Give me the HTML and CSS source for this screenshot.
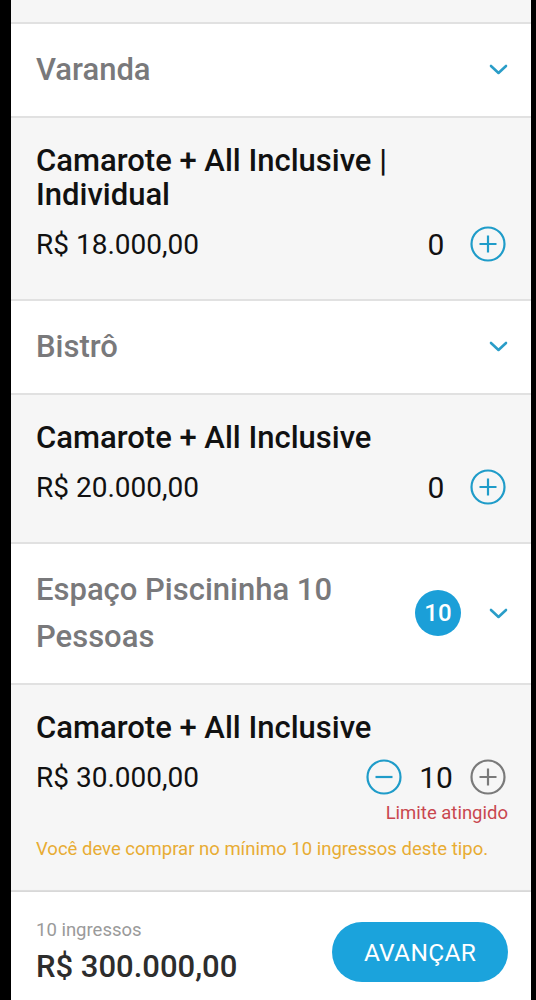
FILE: index.html
```html
<!DOCTYPE html>
<html lang="pt-BR">
<head>
<meta charset="utf-8">
<title>Ingressos</title>
<link rel="stylesheet" href="styles.css">
</head>
<body>
<div class="screen">
  <div class="top-rest"></div>

  <div class="group-header">
    <span class="group-title">Varanda</span>
    <div class="group-right">
      <svg class="chevron" viewBox="0 0 19 11" width="19" height="11"><path d="M2 2 L9.5 9 L17 2"/></svg>
    </div>
  </div>

  <div class="item">
    <div class="item-title">Camarote + All Inclusive | Individual</div>
    <div class="price-row">
      <span class="price">R$ 18.000,00</span>
      <div class="qty">
        <span class="qty-num">0</span>
        <svg class="qbtn blue" viewBox="0 0 36 36" width="36" height="36"><circle cx="18" cy="18" r="16.5"/><path d="M9.5 18 H26.5 M18 9.5 V26.5"/></svg>
      </div>
    </div>
  </div>

  <div class="group-header">
    <span class="group-title">Bistrô</span>
    <div class="group-right">
      <svg class="chevron" viewBox="0 0 19 11" width="19" height="11"><path d="M2 2 L9.5 9 L17 2"/></svg>
    </div>
  </div>

  <div class="item">
    <div class="item-title">Camarote + All Inclusive</div>
    <div class="price-row">
      <span class="price">R$ 20.000,00</span>
      <div class="qty">
        <span class="qty-num">0</span>
        <svg class="qbtn blue" viewBox="0 0 36 36" width="36" height="36"><circle cx="18" cy="18" r="16.5"/><path d="M9.5 18 H26.5 M18 9.5 V26.5"/></svg>
      </div>
    </div>
  </div>

  <div class="group-header">
    <span class="group-title">Espaço Piscininha 10 Pessoas</span>
    <div class="group-right">
      <span class="badge">10</span>
      <svg class="chevron" viewBox="0 0 19 11" width="19" height="11"><path d="M2 2 L9.5 9 L17 2"/></svg>
    </div>
  </div>

  <div class="item item--limited">
    <div class="item-title">Camarote + All Inclusive</div>
    <div class="price-row">
      <span class="price">R$ 30.000,00</span>
      <div class="qty">
        <svg class="qbtn blue" viewBox="0 0 36 36" width="36" height="36"><circle cx="18" cy="18" r="16.5"/><path d="M9.5 18 H26.5"/></svg>
        <span class="qty-num">10</span>
        <svg class="qbtn gray" viewBox="0 0 36 36" width="36" height="36"><circle cx="18" cy="18" r="16.5"/><path d="M9.5 18 H26.5 M18 9.5 V26.5"/></svg>
      </div>
    </div>
    <div class="limit">Limite atingido</div>
    <div class="warning">Você deve comprar no mínimo 10 ingressos deste tipo.</div>
  </div>

  <div class="footer">
    <div class="summary">
      <span class="summary-count">10 ingressos</span>
      <span class="summary-total">R$ 300.000,00</span>
    </div>
    <button class="next-btn">AVANÇAR</button>
  </div>
</div>
</body>
</html>
```
FILE: styles.css
```css
html, body {
  margin: 0;
  padding: 0;
  background: #000;
  font-family: Roboto, "Noto Sans", Arial, sans-serif;
}

.screen {
  margin: 0 5px 0 11px;
  width: 520px;
  height: 1000px;
  background: #fff;
  display: flex;
  flex-direction: column;
  overflow: hidden;
}

.top-rest {
  height: 22px;
  background: #f6f6f6;
  border-bottom: 2px solid #e1e1e1;
}

.group-header {
  display: flex;
  align-items: center;
  justify-content: space-between;
  padding: 22px 23px 23px 25px;
  background: #fff;
  border-bottom: 2px solid #e1e1e1;
}

.group-title {
  font-size: 31px;
  font-weight: 500;
  line-height: 47px;
  color: #79797b;
  max-width: 330px;
}

.group-right {
  display: flex;
  align-items: center;
  gap: 28px;
}

.chevron {
  display: block;
}

.chevron path {
  fill: none;
  stroke: #2a9dc8;
  stroke-width: 2.6;
  stroke-linecap: round;
  stroke-linejoin: round;
}

.badge {
  width: 46px;
  height: 46px;
  border-radius: 50%;
  background: #1b9fd8;
  color: #fff;
  font-size: 24px;
  font-weight: 500;
  display: flex;
  align-items: center;
  justify-content: center;
}

.item {
  background: #f6f6f6;
  padding: 26px 25px 37px 25px;
  border-bottom: 2px solid #e1e1e1;
}

.item--limited {
  padding-bottom: 30px;
}

.item-title {
  font-size: 31px;
  font-weight: 500;
  line-height: 34px;
  color: #111;
  max-width: 400px;
}

.price-row {
  display: flex;
  align-items: center;
  justify-content: space-between;
  height: 36px;
  margin-top: 14px;
}

.price {
  font-size: 28px;
  color: #111;
}

.qty {
  display: flex;
  align-items: center;
  gap: 16px;
}

.qty-num {
  min-width: 36px;
  text-align: center;
  font-size: 30px;
  color: #111;
}

.qbtn {
  display: block;
}

.qbtn circle,
.qbtn path {
  fill: none;
  stroke-width: 2.2;
}

.qbtn.blue circle,
.qbtn.blue path {
  stroke: #1f9cc9;
}

.qbtn.gray circle,
.qbtn.gray path {
  stroke: #7a7a7a;
}

.limit {
  margin-top: 8px;
  text-align: right;
  margin-right: -2px;
  font-size: 18.5px;
  line-height: 20px;
  color: #c9474f;
}

.warning {
  margin-top: 15px;
  font-size: 18.5px;
  line-height: 22px;
  color: #e8ac33;
}

.footer {
  flex: 1;
  display: flex;
  align-items: flex-start;
  justify-content: space-between;
  padding: 27px 23px 0 25px;
  background: #fff;
  box-shadow: 0 -1px 2px rgba(0, 0, 0, 0.06);
}

.summary {
  display: flex;
  flex-direction: column;
  gap: 8px;
}

.summary-count {
  font-size: 18.5px;
  line-height: 22px;
  color: #9a9a9a;
}

.summary-total {
  font-size: 31px;
  font-weight: 500;
  line-height: 36px;
  color: #2d2d2d;
}

.next-btn {
  margin-top: 3px;
  width: 176px;
  height: 60px;
  border: none;
  border-radius: 30px;
  background: #1ba3dc;
  color: #fff;
  font-family: Roboto, "Noto Sans", Arial, sans-serif;
  font-size: 24.5px;
  font-weight: 400;
  letter-spacing: 0.3px;
}
```
